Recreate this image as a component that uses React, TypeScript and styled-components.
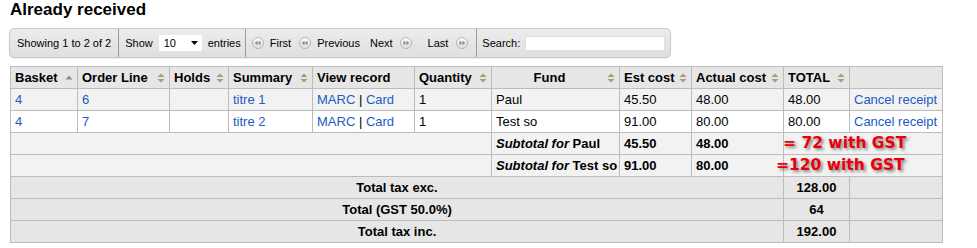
import * as React from 'react'
import styled, { createGlobalStyle } from 'styled-components'

const GlobalStyle = createGlobalStyle`
  body {
    margin: 0;
    padding: 0 10px;
    background: #fff;
    font-family: "Liberation Sans", Arial, sans-serif;
    color: #000;
  }
`

const Title = styled.h1`
  margin: 0;
  font-size: 17px;
  line-height: 20px;
  font-weight: bold;
`

const Toolbar = styled.div`
  display: inline-flex;
  align-items: stretch;
  height: 28px;
  margin: 8px 0 0 -1px;
  border: 1px solid #c9c9c9;
  border-radius: 5px;
  background: linear-gradient(#ececec, #dfdfdf);
  box-shadow: 0 1px 1px rgba(0, 0, 0, 0.08);
  font-size: 11px;
`

const Section = styled.div<{ $first?: boolean; $pl: number; $pr: number; $gap: number }>`
  display: flex;
  align-items: center;
  gap: ${p => p.$gap}px;
  padding: 0 ${p => p.$pr}px 0 ${p => p.$pl}px;
  border-left: ${p => (p.$first ? 'none' : '1px solid #9a9a9a')};
  white-space: nowrap;
`

const Select = styled.div`
  display: flex;
  align-items: center;
  justify-content: space-between;
  width: 43px;
  height: 16px;
  box-sizing: border-box;
  padding: 0 4px 0 5px;
  background: #fff;
`

const SearchBox = styled.div`
  width: 140px;
  height: 15px;
  box-sizing: border-box;
  background: #fff;
  border: 1px solid #e0e0e0;
`

const PageLink = styled.span<{ $gap: number; $before?: number }>`
  display: inline-flex;
  align-items: center;
  gap: ${p => p.$gap}px;
  margin-left: ${p => p.$before || 0}px;
`

const Table = styled.table`
  margin-top: 8px;
  width: 932px;
  table-layout: fixed;
  border-collapse: collapse;
  font-size: 13px;
  line-height: 15px;
`

const Th = styled.th`
  padding: 3px 4px;
  background: #e6e6e6;
  border: 1px solid #bcbcbc;
  font-weight: bold;
  text-align: left;
  white-space: nowrap;
`

const HeadInner = styled.div<{ $center?: boolean }>`
  display: flex;
  align-items: center;
  gap: 4px;
  & > span:first-child {
    flex: 1;
    text-align: ${p => (p.$center ? 'center' : 'left')};
  }
`

const Row = styled.tr<{ $tone: 'light' | 'white' | 'total' }>`
  background: ${p => (p.$tone === 'light' ? '#f2f2f2' : p.$tone === 'white' ? '#fff' : '#e6e6e6')};
`

const Td = styled.td<{ $align?: 'left' | 'center'; $bold?: boolean }>`
  padding: 3px 4px;
  border: 1px solid #bcbcbc;
  text-align: ${p => p.$align || 'left'};
  font-weight: ${p => (p.$bold ? 'bold' : 'normal')};
  white-space: nowrap;
  overflow: visible;
`

const Link = styled.a`
  color: #1a5cc4;
  text-decoration: none;
`

const Note = styled.span<{ $shift: number }>`
  display: inline-block;
  margin-left: ${p => p.$shift}px;
  color: #e8000a;
  font-family: "DejaVu Sans", sans-serif;
  font-weight: bold;
  font-size: 15.5px;
  line-height: 15px;
  text-shadow: 2px 2px 3px rgba(0, 0, 0, 0.45);
`

const SortBoth = () => (
  <svg width="8" height="10" viewBox="0 0 8 10">
    <path d="M4 0.5 L7.5 4 L0.5 4 Z M4 9.5 L7.5 6 L0.5 6 Z" fill="#9aa27e" />
  </svg>
)

const SortUp = () => (
  <svg width="8" height="10" viewBox="0 0 8 10">
    <path d="M4 2.5 L7.5 6.5 L0.5 6.5 Z" fill="#8c8c8c" />
  </svg>
)

const PagerIcon: React.FC<{ dir: 'left' | 'right' }> = ({ dir }) => (
  <svg width="12" height="12" viewBox="0 0 12 12">
    <defs>
      <linearGradient id={`pg-${dir}`} x1="0" y1="0" x2="0" y2="1">
        <stop offset="0" stopColor="#fdfdfd" />
        <stop offset="1" stopColor="#dcdcdc" />
      </linearGradient>
    </defs>
    <circle cx="6" cy="6" r="5.5" fill={`url(#pg-${dir})`} stroke="#b4b4b4" />
    {dir === 'left' ? (
      <path d="M2.7 6 L5.5 3.7 L5.5 8.3 Z M5.7 6 L8.5 3.7 L8.5 8.3 Z" fill="#8a8a8a" />
    ) : (
      <path d="M9.3 6 L6.5 3.7 L6.5 8.3 Z M6.3 6 L3.5 3.7 L3.5 8.3 Z" fill="#8a8a8a" />
    )}
  </svg>
)

const columns: { label: string; width: number; sort?: 'up' | 'both'; center?: boolean }[] = [
  { label: 'Basket', width: 67, sort: 'up' },
  { label: 'Order Line', width: 92, sort: 'both' },
  { label: 'Holds', width: 59, sort: 'both' },
  { label: 'Summary', width: 84, sort: 'both' },
  { label: 'View record', width: 102 },
  { label: 'Quantity', width: 77, sort: 'both' },
  { label: 'Fund', width: 128, sort: 'both', center: true },
  { label: 'Est cost', width: 72, sort: 'both' },
  { label: 'Actual cost', width: 92, sort: 'both' },
  { label: 'TOTAL', width: 66, sort: 'both' },
  { label: '', width: 93 },
]

const received = [
  { basket: '4', line: '6', title: 'titre 1', qty: '1', fund: 'Paul', est: '45.50', actual: '48.00', total: '48.00' },
  { basket: '4', line: '7', title: 'titre 2', qty: '1', fund: 'Test so', est: '91.00', actual: '80.00', total: '80.00' },
]

const subtotals = [
  { fund: 'Paul', est: '45.50', actual: '48.00', note: '= 72 with GST', shift: -5 },
  { fund: 'Test so', est: '91.00', actual: '80.00', note: '=120 with GST', shift: -12 },
]

const totals = [
  { label: 'Total tax exc.', value: '128.00' },
  { label: 'Total (GST 50.0%)', value: '64' },
  { label: 'Total tax inc.', value: '192.00' },
]

export default function App() {
  return (
    <>
      <GlobalStyle />
      <Title>Already received</Title>
      <Toolbar>
        <Section $first $pl={7} $pr={7} $gap={0}>Showing 1 to 2 of 2</Section>
        <Section $pl={6} $pr={4} $gap={6}>
          <span>Show</span>
          <Select>
            <span>10</span>
            <svg width="7" height="4" viewBox="0 0 7 4">
              <path d="M0 0 L7 0 L3.5 4 Z" fill="#000" />
            </svg>
          </Select>
          <span>entries</span>
        </Section>
        <Section $pl={6} $pr={8} $gap={0}>
          <PageLink $gap={6}><PagerIcon dir="left" />First</PageLink>
          <PageLink $gap={6} $before={8}><PagerIcon dir="left" />Previous</PageLink>
          <PageLink $gap={7} $before={10}>Next<PagerIcon dir="right" /></PageLink>
          <PageLink $gap={8} $before={16}>Last<PagerIcon dir="right" /></PageLink>
        </Section>
        <Section $pl={5} $pr={5} $gap={5}>
          <span>Search:</span>
          <SearchBox />
        </Section>
      </Toolbar>
      <Table>
        <colgroup>
          {columns.map(c => <col key={c.label || 'actions'} style={{ width: c.width }} />)}
        </colgroup>
        <thead>
          <tr>
            {columns.map(c => (
              <Th key={c.label || 'actions'}>
                <HeadInner $center={c.center}>
                  <span>{c.label || '\u00a0'}</span>
                  {c.sort === 'up' && <SortUp />}
                  {c.sort === 'both' && <SortBoth />}
                </HeadInner>
              </Th>
            ))}
          </tr>
        </thead>
        <tbody>
          {received.map((r, i) => (
            <Row key={r.line} $tone={i % 2 === 0 ? 'light' : 'white'}>
              <Td><Link href="#">{r.basket}</Link></Td>
              <Td><Link href="#">{r.line}</Link></Td>
              <Td />
              <Td><Link href="#">{r.title}</Link></Td>
              <Td><Link href="#">MARC</Link> | <Link href="#">Card</Link></Td>
              <Td>{r.qty}</Td>
              <Td>{r.fund}</Td>
              <Td>{r.est}</Td>
              <Td>{r.actual}</Td>
              <Td>{r.total}</Td>
              <Td><Link href="#">Cancel receipt</Link></Td>
            </Row>
          ))}
          {subtotals.map(s => (
            <Row key={s.fund} $tone="light">
              <Td colSpan={6} />
              <Td $bold><i>Subtotal for</i> {s.fund}</Td>
              <Td $bold>{s.est}</Td>
              <Td $bold>{s.actual}</Td>
              <Td colSpan={2}>
                <Note $shift={s.shift}>{s.note}</Note>
              </Td>
            </Row>
          ))}
          {totals.map(t => (
            <Row key={t.label} $tone="total">
              <Td colSpan={9} $align="center" $bold>{t.label}</Td>
              <Td $align="center" $bold>{t.value}</Td>
              <Td />
            </Row>
          ))}
        </tbody>
      </Table>
    </>
  )
}
